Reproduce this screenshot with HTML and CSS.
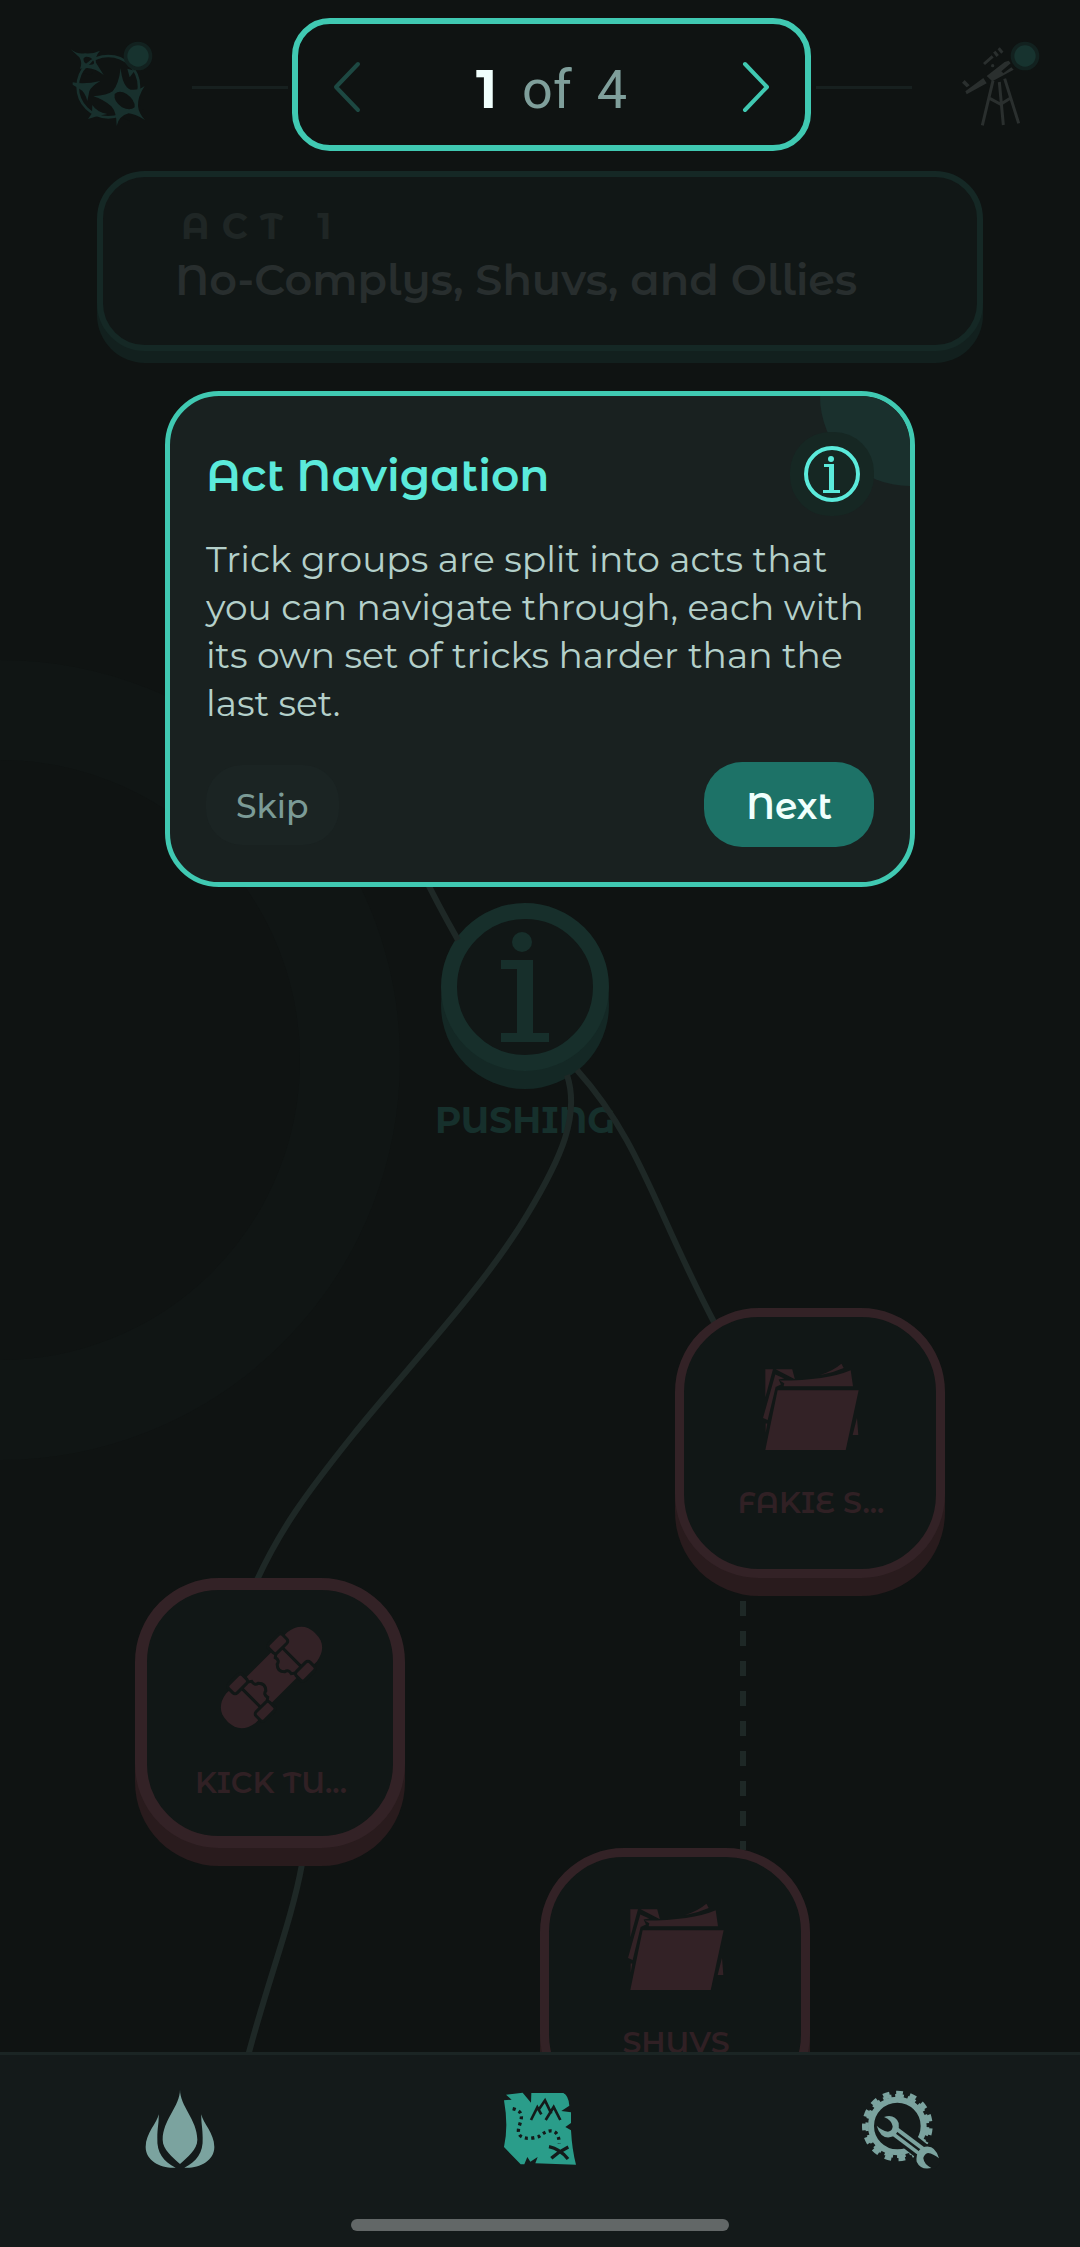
FILE: index.html
```html
<!DOCTYPE html>
<html lang="en">
<head>
<meta charset="utf-8">
<meta name="viewport" content="width=device-width, initial-scale=1">
<title>Act Navigation</title>
<link rel="stylesheet" href="styles.css">
</head>
<body>
<svg class="defs" aria-hidden="true">
  <symbol id="folder" viewBox="305 215 295 265">
    <path d="M352 297H596L557 477H315Z"/>
    <path d="M370 285H579L572 237Q500 268 358 268L372 276Z"/>
    <path d="M478 252Q520 238 544 217L551 230Q515 246 478 252Z"/>
    <path d="M315 234H338L315 318ZM346 234H396L404 264Z"/>
    <path d="M345 250L372 262L355 265L362 280L346 287L322 387L308 381ZM316 397H321L316 425ZM591 380L595 432H578Z"/>
  </symbol>
</svg>
<div class="app">
  <header class="topbar">
    <button class="tool tool-left" aria-label="Planet">
      <svg viewBox="60 125 252 261" width="84" height="87">
        <circle cx="175" cy="262" r="92" fill="none" stroke="#18302d" stroke-width="8"/>
        <path class="cut" d="M100 222L130 182L148 184L124 226ZM210 350L258 300L280 330L240 366Z"/>
        <path class="ink" fill-rule="evenodd" d="M62 150Q82 166 105 162Q130 164 150 154Q134 172 138 190L161 227Q138 208 112 206L90 208Q98 190 88 174ZM101 176Q97 192 117 196Q134 198 132 188Q126 172 108 172Z"/>
        <path class="ink" fill-rule="evenodd" d="M212 206Q217 262 242 271Q264 274 284 260Q262 294 264 320Q266 342 285 362Q256 344 236 342Q206 350 200 380Q200 338 184 321Q160 300 130 291Q172 288 188 276Q206 256 212 206ZM194 284Q190 306 216 324Q240 336 254 324Q256 302 230 284Q208 270 194 284Z"/>
        <path class="ink" d="M68 249Q104 256 151 245Q122 262 118 276L112 305Q104 276 90 270L68 256ZM127 317Q140 338 172 344Q144 348 114 359L126 342ZM232 208L254 214L239 234Z"/>
        <circle cx="264" cy="170" r="43" fill="#12211f"/>
        <circle cx="264" cy="170" r="32" fill="#17332f"/>
      </svg>
    </button>
    <span class="rule"></span>
    <nav class="pager" aria-label="Acts">
      <button class="chev chev-off" aria-label="Previous act"><svg viewBox="0 0 28 52" width="28" height="52"><path d="M25 3L3 26L25 49"/></svg></button>
      <p class="count"><b>1</b><span>of</span><span>4</span></p>
      <button class="chev" aria-label="Next act"><svg viewBox="0 0 28 52" width="28" height="52"><path d="M3 3L25 26L3 49"/></svg></button>
    </nav>
    <span class="rule"></span>
    <button class="tool tool-right" aria-label="Telescope">
      <svg viewBox="0 125 240 261" width="80" height="87">
        <g fill="#2a2f2e">
          <path d="M10 276L64 236L74 252L14 285ZM74 230L128 188L140 184L146 192L118 216L124 222L148 204L155 211L91 246ZM0 250L8 242L23 258L14 264Z"/>
          <circle cx="92" cy="199" r="5"/>
        </g>
        <g fill="none" stroke="#2a2f2e" stroke-width="9">
          <path d="M93 244L61 378M112 248L124 377M128 238L170 372M83 297L116 315L147 295"/>
          <path d="M66 194L92 171M97 157L107 170M110 147L121 160"/>
        </g>
        <circle cx="189" cy="170" r="43" fill="#12211f"/>
        <circle cx="189" cy="170" r="32" fill="#17332f"/>
      </svg>
    </button>
  </header>

  <main class="stage">
    <div class="map">
      <article class="node round pushing">
        <div class="face"><svg viewBox="0 0 136 136" width="136" height="136"><circle cx="65" cy="23" r="10"/><path d="M44 41H76V114H92V123H44V114H60V50H44Z"/></svg></div>
        <h3>PUSHING</h3>
      </article>
      <svg class="links" viewBox="0 0 1080 2052" width="1080" height="2052" aria-hidden="true">
        <circle class="halo" cx="0" cy="1060" r="350"/>
        <path d="M421 870Q437 903 458 940"/>
        <path d="M567 1075C580 1115 562 1157 527 1215C482 1290 405 1370 353 1435C305 1495 280 1530 257 1580"/>
        <path d="M577 1070C640 1140 655 1210 715 1324"/>
        <path d="M302 1864C292 1920 268 1980 248 2056"/>
        <path d="M743 1601V1850" stroke-dasharray="15 15"/>
      </svg>
      <article class="node tile fakie">
        <svg width="98" height="88"><use href="#folder"/></svg>
        <h3>FAKIE S...</h3>
      </article>
      <article class="node tile thick kick">
        <svg viewBox="290 190 320 320" width="107" height="107">
          <g transform="translate(450 350) rotate(-45)">
            <path d="M-130 -62H-108V-54H108V-62H130Q170 -56 182 -26Q190 0 182 26Q170 56 130 62H108V54H-108V62H-130Q-170 56 -182 26Q-190 0 -182 -26Q-170 -56 -130 -62Z"/>
            <g class="groove">
              <path d="M86 -44V44M-86 -44V44"/>
              <path d="M64 -44L50 -34Q54 -18 40 -16Q24 0 40 16Q54 18 50 34L64 44M-64 -44L-50 -34Q-54 -18 -40 -16Q-24 0 -40 16Q-54 18 -50 34L-64 44"/>
            </g>
            <g stroke="#111716" stroke-width="9">
              <rect x="56" y="-76" width="58" height="36" rx="9"/><rect x="56" y="40" width="58" height="36" rx="9"/>
              <rect x="-114" y="-76" width="58" height="36" rx="9"/><rect x="-114" y="40" width="58" height="36" rx="9"/>
            </g>
          </g>
        </svg>
        <h3>KICK TU...</h3>
      </article>
      <article class="node tile shuvs">
        <svg width="98" height="88"><use href="#folder"/></svg>
        <h3>SHUVS</h3>
      </article>
    </div>

    <section class="act">
      <p>ACT 1</p>
      <h1>No-Complys, Shuvs, and Ollies</h1>
    </section>

    <section class="tip" role="dialog" aria-labelledby="tip-title">
      <header>
        <h2 id="tip-title">Act Navigation</h2>
        <span class="info"><svg viewBox="0 0 56 56" width="56" height="56"><circle cx="28" cy="28" r="26" fill="none" stroke="#5beadb" stroke-width="4"/><circle cx="27" cy="13" r="3" fill="#5beadb"/><path fill="#5beadb" d="M20 18H30V44H36V47H19V44H25V21H20Z"/></svg></span>
      </header>
      <p class="copy">Trick groups are split into acts that you can navigate through, each with its own set of tricks harder than the last set.</p>
      <footer>
        <button class="skip">Skip</button>
        <button class="next">Next</button>
      </footer>
    </section>
  </main>

  <nav class="tabs" aria-label="Main">
    <div class="tabrow">
      <a href="#flame" aria-label="Streak"><svg viewBox="75 88 210 240" width="70" height="80"><path d="M180 90C180 140 128 180 128 240C128 270 158 292 180 313C202 292 232 270 232 240C232 180 180 140 180 90Z"/><path d="M116 164C112 190 77 220 77 262C77 305 125 327 167 324C130 305 110 280 112 235C112 205 117 190 116 164Z"/><path d="M244 164C248 190 283 220 283 262C283 305 235 327 193 324C230 305 250 280 248 235C248 205 243 190 244 164Z"/></svg></a>
      <a href="#map" class="on" aria-label="Map"><svg viewBox="66 64 228 228" width="76" height="76">
        <path d="M78 75L128 69L153 99L154 70H250Q266 78 268 108L244 124L273 128V160L256 172L273 182Q276 240 288 285L166 281L173 262L151 276L142 262L133 284H122L72 232Q86 170 72 92L95 90Z"/>
        <g fill="none" stroke="#141a1a">
          <path stroke-width="8" d="M153 151L172 113L184 134M176 120L195 92L214 132M197 151L221 112L241 151"/>
          <path stroke-width="10" stroke-dasharray="9 10" d="M98 117C138 126 122 150 116 176C108 214 158 208 178 200C204 178 236 172 238 222"/>
          <path stroke-width="10" d="M207 231Q240 238 264 268M265 232Q236 246 214 266"/>
        </g>
      </svg></a>
      <a href="#tools" aria-label="Tools"><svg viewBox="60 56 240 240" width="80" height="80">
        <g fill="none" stroke="#7ba39f">
          <circle cx="172" cy="167" r="79" stroke-width="18"/>
          <circle cx="172" cy="167" r="91" stroke-width="10" stroke-dasharray="26 12.1" transform="rotate(-94 172 167)"/>
          <circle cx="172" cy="167" r="99" stroke-width="14" stroke-dasharray="20 21.5" transform="rotate(-92 172 167)"/>
        </g>
        <path d="M186 196L262 256" stroke="#141a1a" stroke-width="52"/>
        <circle cx="262" cy="262" r="40" fill="#141a1a"/>
        <path d="M160 180L256 252" stroke="#7ba39f" stroke-width="30"/>
        <path d="M168 186L242 242" stroke="#141a1a" stroke-width="7" stroke-linecap="round"/>
        <path d="M132 140Q164 130 176 158Q180 184 160 198Q124 212 110 166Q124 180 144 184Q158 182 158 168Q156 150 132 140Z"/>
        <path d="M274 293Q242 300 230 274Q226 246 246 232Q284 218 297 264Q280 250 264 248Q250 252 250 264Q252 282 274 293Z"/>
      </svg></a>
    </div>
    <span class="handle"></span>
  </nav>
</div>
</body>
</html>
```
FILE: styles.css
```css
* { box-sizing: border-box; margin: 0; padding: 0; }

:root {
  --bg: #0f1312;
  --panel: #111716;
  --rose: #332226;
  --rose-dark: #291b1d;
  --teal: #40c9b2;
  --head: "Montserrat Alternates", Montserrat, Inter, sans-serif;
  --body: Montserrat, Inter, sans-serif;
}

body { background: var(--bg); font-family: var(--body); }
button { border: 0; background: none; font: inherit; cursor: pointer; }
svg { display: block; }
.defs { position: absolute; width: 0; height: 0; }

.app { display: flex; flex-direction: column; min-height: 100vh; position: relative; overflow: hidden; }

.topbar { display: flex; align-items: center; padding: 18px 38px 0 70px; }
.tool-left { margin-right: 38px; }
.tool-right { margin-left: 50px; }
.ink { fill: #18302d; }
.cut { fill: var(--bg); }
.rule { flex: none; width: 96px; height: 3px; margin-top: 6px; background: #17201f; }
.pager {
  flex: 1; margin: 0 5px 0 4px; height: 133px; padding: 5px 35px 0;
  display: flex; align-items: center; justify-content: space-between;
  border: 6px solid var(--teal); border-radius: 38px;
}
.chev path { fill: none; stroke: var(--teal); stroke-width: 4; stroke-linecap: round; stroke-linejoin: round; }
.chev-off path { stroke: #1d4842; }
.count { padding-top: 4px; display: flex; align-items: baseline; gap: 25px; font: 400 54px/60px Roboto, sans-serif; color: #7f9f9b; }
.count b { font-family: var(--body); font-weight: 700; color: #f0fffd; }

.stage { flex: 1; display: flex; flex-direction: column; align-items: center; padding: 20px 97px 0; }

.act {
  position: relative; align-self: stretch; height: 180px; padding: 27px 72px;
  background: var(--panel); border: 6px solid #152825; border-radius: 48px;
  box-shadow: 0 12px 0 #12201e; font-family: var(--head);
}
.act p { padding-left: 6px; font-size: 36px; line-height: 44px; font-weight: 700; letter-spacing: 12px; color: #1f2625; }
.act h1 { font-size: 43px; line-height: 64px; font-weight: 600; color: #282e2e; }

.tip {
  position: relative; overflow: hidden; width: 750px; max-width: 100%;
  margin-top: 40px; padding: 36px 36px 35px;
  background: #192120; border: 5px solid var(--teal); border-radius: 54px;
}
.tip::before {
  content: ""; position: absolute; top: -90px; right: -90px;
  width: 180px; height: 180px; border-radius: 50%; background: #1a302d;
}
.tip header, .tip footer { position: relative; display: flex; align-items: center; justify-content: space-between; }
.tip h2 { padding-top: 2px; font: 600 44px/56px var(--head); color: #5beadb; }
.info { display: grid; place-items: center; width: 84px; height: 84px; border-radius: 40px; background: #162723; }
.copy { margin-top: 19px; font-size: 36px; line-height: 48px; color: #b4d0ca; }
.tip footer { margin-top: 35px; }
.skip { height: 80px; padding: 2px 30px 0; border-radius: 36px; background: #1b2423; font-size: 33px; font-weight: 500; color: #7b9b96; }
.next { height: 85px; padding: 2px 42px 0; border-radius: 38px; background: #1d7267; font: 600 36px/48px var(--head); color: #f0fffd; }

/* Free canvas of trick nodes, centred in the window */
.map { position: absolute; inset: 0; }
.links { position: absolute; top: 0; left: calc(50% - 540px); fill: none; stroke: #1e2826; stroke-width: 6; }
.halo { stroke: #101514; stroke-width: 100; }
.node { position: absolute; font-family: var(--head); }
.node h3 { line-height: 36px; white-space: nowrap; }
.round { display: flex; flex-direction: column; align-items: center; width: 168px; }
.round .face { width: 168px; height: 168px; border: 16px solid #172f2b; border-radius: 50%; background: var(--panel); box-shadow: 0 18px 0 #142825; }
.round svg { fill: #172f2b; }
.round h3 { margin-top: 31px; font-size: 36px; font-weight: 700; color: #16302c; }
.tile {
  display: flex; flex-direction: column; align-items: center;
  width: 270px; height: 270px; padding: 46px 0 0 2px; border: 9px solid var(--rose); border-radius: 84px;
  background: var(--panel); box-shadow: 0 18px 0 var(--rose-dark);
}
.thick { border-width: 12px; padding-top: 34px; }
.tile svg { fill: var(--rose); }
.tile h3 { margin-top: 34px; font-size: 30px; font-weight: 600; color: #302024; }
.groove { fill: none; stroke: #111716; stroke-width: 9; }
.pushing { left: calc(50% - 99px); top: 903px; }
.fakie { left: calc(50% + 135px); top: 1308px; }
.kick { left: calc(50% - 405px); top: 1578px; }
.shuvs { left: 50%; top: 1848px; }

.tabs { position: relative; height: 195px; background: #141a1a; border-top: 3px solid #1b2524; display: flex; flex-direction: column; align-items: center; justify-content: space-between; padding: 34px 0 16px; }
.tabrow { align-self: stretch; display: grid; grid-template-columns: repeat(3, 1fr); align-items: center; justify-items: center; }
.tabrow svg { fill: #7ba39f; }
.on svg { fill: #2a9d8a; }
.handle { width: 378px; height: 12px; border-radius: 6px; background: #626767; }
```
